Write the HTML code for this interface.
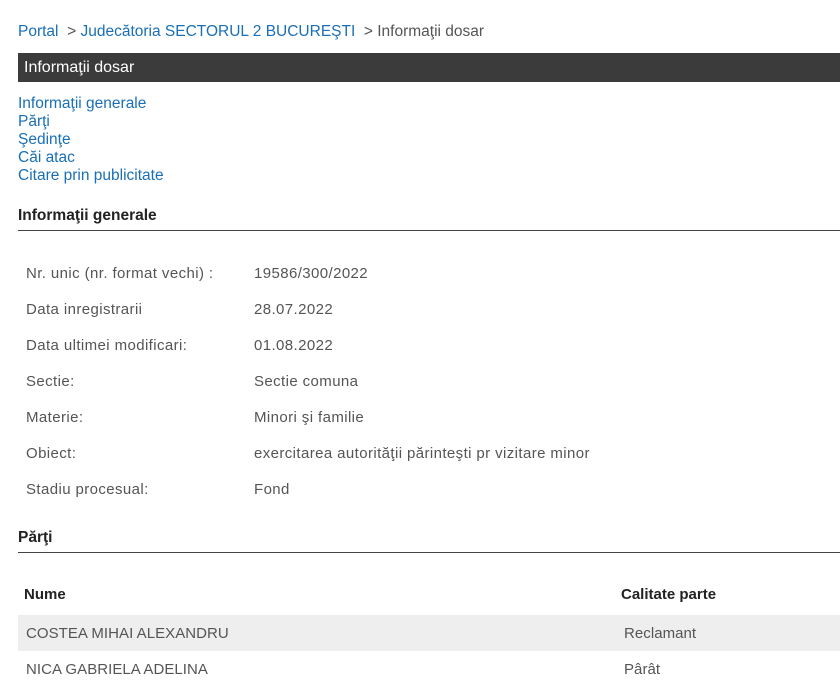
<!DOCTYPE html>
<html><head><meta charset="utf-8"><style>
body{margin:0;background:#fff;font-family:"Liberation Sans",sans-serif;width:840px;height:700px;overflow:hidden;position:relative}
.a{position:absolute;white-space:nowrap}
.bl{color:#1a6fb5}
.bc{left:18px;top:23px;font-size:15.5px;color:#555}
.bar{left:18px;top:53px;width:822px;height:29px;background:#3b3b3b;color:#fff;font-size:16px;line-height:29px;text-indent:6px}
.links{left:18px;top:95px;font-size:15.5px;line-height:18px;color:#1a6fb5}
.h{left:18px;font-size:15.5px;font-weight:bold;color:#222}
.line{left:18px;width:822px;height:1px;background:#444}
.r{font-size:15px;letter-spacing:0.4px;color:#555}
.t{letter-spacing:0.05px}
.th{font-size:15px;font-weight:bold;color:#222;letter-spacing:0px}
</style></head><body>
<div class="a bc"><span class="bl">Portal</span> &nbsp;&gt; <span class="bl">Judecătoria SECTORUL 2 BUCUREŞTI</span> &nbsp;&gt; Informaţii dosar</div>
<div class="a bar">Informaţii dosar</div>
<div class="a links">Informaţii generale<br>Părţi<br>Şedinţe<br>Căi atac<br>Citare prin publicitate</div>
<div class="a h" style="top:207px">Informaţii generale</div>
<div class="a line" style="top:230px"></div>
<div class="a r" style="left:26px;top:265px">Nr. unic (nr. format vechi) :</div><div class="a r" style="left:254px;top:265px">19586/300/2022</div>
<div class="a r" style="left:26px;top:301px">Data inregistrarii</div><div class="a r" style="left:254px;top:301px">28.07.2022</div>
<div class="a r" style="left:26px;top:337px">Data ultimei modificari:</div><div class="a r" style="left:254px;top:337px">01.08.2022</div>
<div class="a r" style="left:26px;top:373px">Sectie:</div><div class="a r" style="left:254px;top:373px">Sectie comuna</div>
<div class="a r" style="left:26px;top:409px">Materie:</div><div class="a r" style="left:254px;top:409px">Minori şi familie</div>
<div class="a r" style="left:26px;top:445px">Obiect:</div><div class="a r" style="left:254px;top:445px">exercitarea autorităţii părinteşti pr vizitare minor</div>
<div class="a r" style="left:26px;top:481px">Stadiu procesual:</div><div class="a r" style="left:254px;top:481px">Fond</div>
<div class="a h" style="top:529px">Părţi</div>
<div class="a line" style="top:552px"></div>
<div class="a th" style="left:24px;top:586px">Nume</div><div class="a th" style="left:621px;top:586px">Calitate parte</div>
<div class="a" style="left:18px;top:615px;width:822px;height:36px;background:#eee"></div>
<div class="a r t" style="left:26px;top:625px">COSTEA MIHAI ALEXANDRU</div><div class="a r t" style="left:624px;top:625px">Reclamant</div>
<div class="a r t" style="left:26px;top:661px">NICA GABRIELA ADELINA</div><div class="a r t" style="left:624px;top:661px">Pârât</div>
</body></html>
